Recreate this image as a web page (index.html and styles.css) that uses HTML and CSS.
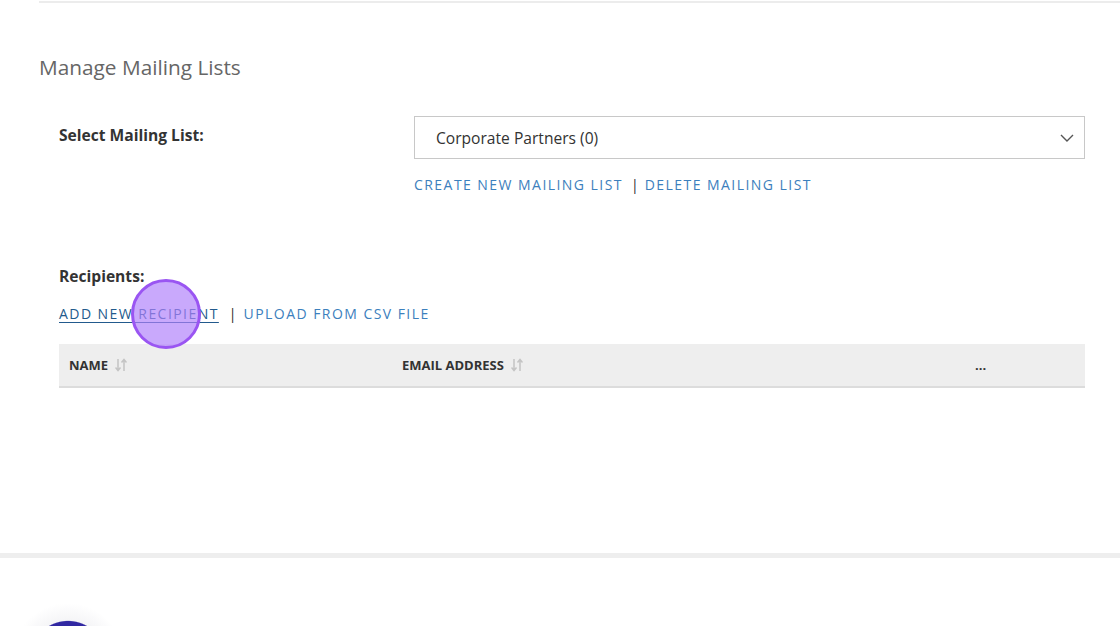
FILE: index.html
```html
<!doctype html>
<html lang="en">
<head>
	<meta charset="utf-8">
	<title>Manage Mailing Lists</title>
	<link rel="stylesheet" href="styles.css">
</head>
<body>
	<div class="top-rule"></div>

	<div class="page">
		<h2 class="title">Manage Mailing Lists</h2>

		<div class="list-row">
			<div class="label">Select Mailing List:</div>
			<div class="list-col">
				<div class="select-box">
					<span>Corporate Partners (0)</span>
					<svg class="chev" width="14" height="8" viewBox="0 0 14 8"><path d="M1 1 L7 7 L13 1" fill="none" stroke="#555" stroke-width="1.4"/></svg>
				</div>
				<div class="links">
					<a href="#">Create new mailing list</a>
					<span class="sep">|</span>
					<a href="#">Delete mailing list</a>
				</div>
			</div>
		</div>

		<div class="recipients">
			<div class="label">Recipients:</div>
			<div class="links rec-links">
				<span class="click-wrap">
					<a href="#" class="active">Add new recipient</a>
					<span class="click-dot"></span>
				</span>
				<span class="sep">|</span>
				<a href="#">Upload from CSV file</a>
			</div>

			<div class="table-head">
				<div class="th th-name">NAME
					<svg class="sort" width="12" height="14" viewBox="0 0 12 14"><path d="M3 1 V12 M0.5 9.5 L3 12.5 L5.5 9.5 M9 13 V2 M6.5 4.5 L9 1.5 L11.5 4.5" fill="none" stroke="#c4c4c4" stroke-width="1.5"/></svg>
				</div>
				<div class="th th-email">EMAIL ADDRESS
					<svg class="sort" width="12" height="14" viewBox="0 0 12 14"><path d="M3 1 V12 M0.5 9.5 L3 12.5 L5.5 9.5 M9 13 V2 M6.5 4.5 L9 1.5 L11.5 4.5" fill="none" stroke="#c4c4c4" stroke-width="1.5"/></svg>
				</div>
				<div class="th th-more">...</div>
			</div>
		</div>
	</div>

	<div class="footer">
		<span class="avatar"></span>
	</div>
</body>
</html>
```

FILE: styles.css
```css
*{ margin: 0px; padding: 0px; box-sizing: border-box; }
body{
	font-family: "Open Sans", "Liberation Sans", sans-serif;
	color: #333; background: #fff;
	width: 1120px; height: 626px; overflow: hidden; }

.top-rule{
	margin-left: 39px; height: 2px; margin-top: 1px;
	background-color: #ececec; }

.page{ padding: 50px 35px 0 39px; height: 550px; }

.title{
	font-weight: 400; font-size: 20.8px; color: #666;
	line-height: 28px; }

.list-row{
	display: flex; margin-top: 35px; padding-left: 20px; }
.label{
	font-weight: 700; font-size: 15.6px; color: #333; line-height: 22px; }
.list-row .label{ width: 355px; padding-top: 8px; }
.list-col{ flex: 1; }

.select-box{
	height: 43px; border: 1px solid #c8c8c8;
	display: flex; align-items: center; justify-content: space-between;
	padding: 0 10px 0 21px; font-size: 15.6px; color: #333; }
.chev{ margin-top: 1px; }

.links{
	display: flex; align-items: center;
	font-size: 14px; letter-spacing: 1.45px; line-height: 20px; }
.list-col .links{ margin-top: 16px; }
.links a{
	color: #3c80bd; text-decoration: none; text-transform: uppercase; }
.sep{ color: #2b2b2b; margin: 0 7px 0 10px; letter-spacing: 0; }
.list-col .sep{ margin: 0 6px 0 8px; }

.recipients{ padding-left: 20px; margin-top: 70px; }
.rec-links{ margin-top: 17px; }
.links a.active{
	color: #225a8d; text-decoration: underline; text-underline-offset: 3px; }

.click-wrap{ position: relative; display: inline-block; }
.click-dot{
	position: absolute; left: 72px; top: -25px;
	width: 70px; height: 70px; border-radius: 50%;
	background-color: rgba(176, 128, 250, 0.68);
	border: 3px solid #9a55f2; }

.table-head{
	display: flex; align-items: center; margin-top: 20px;
	height: 44px; background-color: #eeeeee;
	border-bottom: 2px solid #dcdcdc;
	font-size: 13px; font-weight: 700; color: #333; }
.th{ display: flex; align-items: center; }
.th-name{ width: 343px; padding-left: 10px; }
.th-email{ width: 573px; }
.th-more{ font-weight: 700; letter-spacing: 0; }
.sort{ margin-left: 7px; }

.footer{
	position: relative; height: 73px;
	border-top: 5px solid #eeeeee; }
.avatar{
	position: absolute; left: 12px; top: 45px;
	width: 112px; height: 112px; border-radius: 50%;
	background: radial-gradient(circle closest-side, #3128a2 0, #3128a2 67%, #f5f5f7 69%, #fafafb 85%, #fff 100%); }
```
